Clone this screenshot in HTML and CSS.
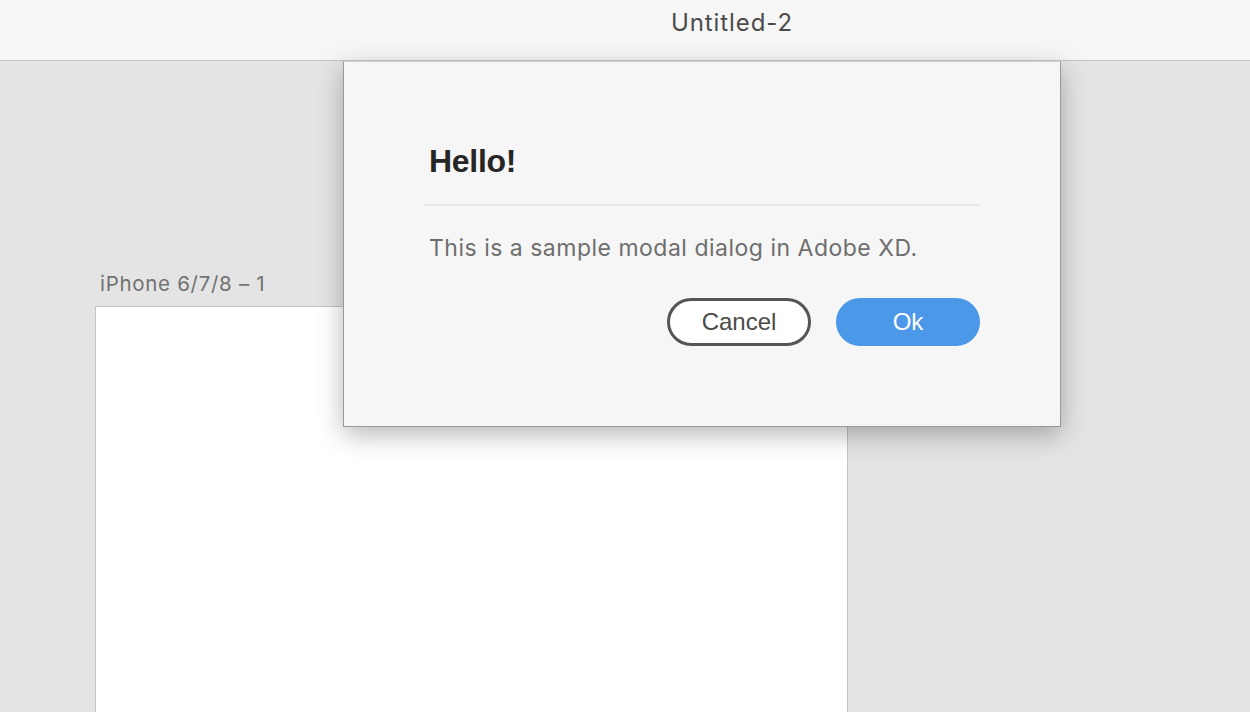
FILE: index.html
```html
<!DOCTYPE html>
<html>
<head>
<meta charset="utf-8">
<link rel="stylesheet" href="styles.css">
</head>
<body>
<div class="app">
  <header class="titlebar"><span class="doc-title">Untitled-2</span></header>
  <main class="canvas">
    <div class="artboard-wrap">
      <div class="artboard-label">iPhone 6/7/8 – 1</div>
      <div class="artboard"></div>
    </div>
    <div class="dialog">
      <h1 class="dialog-title">Hello!</h1>
      <div class="dialog-divider"></div>
      <p class="dialog-body">This is a sample modal dialog in Adobe XD.</p>
      <div class="dialog-actions">
        <button class="btn btn-cancel">Cancel</button>
        <button class="btn btn-ok">Ok</button>
      </div>
    </div>
  </main>
</div>
</body>
</html>
```
FILE: styles.css
```css
* { box-sizing: border-box; }
html, body { margin: 0; padding: 0; }
body {
  width: 1250px;
  height: 712px;
  overflow: hidden;
  background: #e4e4e4;
  font-family: Inter, "Noto Sans", sans-serif;
}
.app { display: flex; flex-direction: column; height: 712px; }
.titlebar {
  height: 61px;
  flex: none;
  background: #f6f6f6;
  border-bottom: 1px solid #c6c6c6;
  display: flex;
  align-items: center;
  padding-left: 671px;
  padding-bottom: 16px;
}
.doc-title {
  font-size: 24px;
  color: #4b4b4b;
  letter-spacing: 0.9px;
}
.canvas {
  position: relative;
  flex: 1;
  padding: 207px 0 0 95px;
}
.artboard-wrap { display: flex; flex-direction: column; width: 753px; }
.artboard-label {
  font-size: 20.5px;
  color: #727272;
  padding-left: 5px;
  padding-top: 2px;
  height: 38px;
  line-height: 28px;
  letter-spacing: 0.7px;
}
.artboard {
  height: 420px;
  background: #fff;
  border: 1px solid #c4c4c4;
}
.dialog {
  position: absolute;
  left: 343px;
  top: 0;
  width: 718px;
  height: 366px;
  background: #f6f6f6;
  border: 1px solid #9a9a9a;
  border-top-color: #d0d0d0;
  box-shadow: 0 8px 24px rgba(0,0,0,0.28);
  padding: 79px 80px 0 80px;
  display: flex;
  flex-direction: column;
}
.dialog-title {
  margin: 0 0 0 5px;
  font-family: "Liberation Sans", Arial, sans-serif;
  font-weight: bold;
  font-size: 32px;
  color: #262626;
  line-height: 40px;
  letter-spacing: -0.3px;
}
.dialog-divider {
  margin-top: 23px;
  height: 2px;
  background: #e6e6e6;
}
.dialog-body {
  margin: 27px 0 0 5px;
  font-size: 23px;
  line-height: 30px;
  color: #6e6e6e;
  letter-spacing: 0.5px;
}
.dialog-actions {
  margin-top: 35px;
  display: flex;
  justify-content: flex-end;
  gap: 25px;
}
.btn {
  height: 48px;
  width: 144px;
  border-radius: 24px;
  font-family: "Liberation Sans", Arial, sans-serif;
  font-size: 24px;
  padding: 0;
  cursor: pointer;
}
.btn-cancel {
  background: #fff;
  border: 3px solid #555;
  color: #4a4a4a;
}
.btn-ok {
  background: #4b97e8;
  border: none;
  color: #fff;
}
```
